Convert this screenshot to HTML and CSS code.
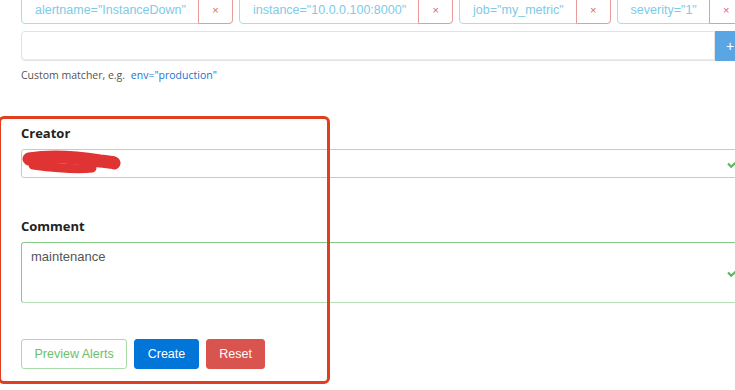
FILE: index.html
```html
<!DOCTYPE html>
<html lang="en">
<head>
  <meta charset="UTF-8" />
  <title>New Silence</title>
  <link rel="stylesheet" href="styles.css">
</head>
<body>
  <div class="page">

    <!-- Matchers -->
    <div class="chips">
      <div class="chip"><span class="chip-label">alertname="InstanceDown"</span><button class="chip-x">×</button></div>
      <div class="chip"><span class="chip-label">instance="10.0.0.100:8000"</span><button class="chip-x">×</button></div>
      <div class="chip"><span class="chip-label">job="my_metric"</span><button class="chip-x">×</button></div>
      <div class="chip"><span class="chip-label">severity="1"</span><button class="chip-x">×</button></div>
    </div>

    <div class="input-group">
      <input class="matcher-input" type="text">
      <button class="add-btn">+</button>
    </div>
    <p class="help">Custom matcher, e.g. <a href="#">env="production"</a></p>

    <!-- Creator / Comment -->
    <div class="field creator-field">
      <label>Creator</label>
      <div class="valid-wrap">
        <input class="form-input light" type="text">
        <svg class="check" width="12" height="9" viewBox="0 0 12 9"><path d="M1 3.5 L4.2 6.8 L10.5 0.8" fill="none" stroke="#5cb85c" stroke-width="2.2"/></svg>
        <svg class="scribble" width="110" height="30" viewBox="0 0 110 30"><path d="M7 9 C30 5 60 8 78 11 C86 12 90 12 92 13" fill="none" stroke="#e03333" stroke-width="13" stroke-linecap="round"/><path d="M11 15 C34 18 54 20 70 18" fill="none" stroke="#e03333" stroke-width="9" stroke-linecap="round"/></svg>
      </div>
    </div>

    <div class="field comment-field">
      <label>Comment</label>
      <div class="valid-wrap">
        <textarea class="form-input area">maintenance</textarea>
        <svg class="check check-area" width="12" height="9" viewBox="0 0 12 9"><path d="M1 3.5 L4.2 6.8 L10.5 0.8" fill="none" stroke="#5cb85c" stroke-width="2.2"/></svg>
      </div>
    </div>

    <div class="actions">
      <button class="btn btn-preview">Preview Alerts</button>
      <button class="btn btn-create">Create</button>
      <button class="btn btn-reset">Reset</button>
    </div>

  </div>

  <!-- highlight box -->
  <div class="highlight"></div>
</body>
</html>
```

FILE: styles.css
```css
body {
  margin: 0;
  background: #ffffff;
  font-family: "Liberation Sans", Arial, sans-serif;
  overflow: hidden;
}

.page {
  width: 739px;
  padding-left: 21px;
}

/* matcher chips */
.chips {
  display: flex;
  gap: 6px;
  margin-top: -4px;
  white-space: nowrap;
}
.chip {
  display: flex;
  height: 28px;
  border: 1px solid #a9dcef;
  border-radius: 4px;
  box-sizing: border-box;
  flex-shrink: 0;
}
.chip-label {
  display: flex;
  align-items: center;
  padding: 0 12px 0 13px;
  font-size: 12.5px;
  color: #7ccbe7;
}
.chip-x {
  width: 35px;
  margin: -1px -1px -1px 0;
  border: 1px solid #e99b9b;
  border-radius: 0 4px 4px 0;
  background: #fff;
  color: #e06666;
  font-size: 11px;
  font-family: "Liberation Sans", Arial, sans-serif;
  padding: 0;
}

.input-group {
  display: flex;
  margin-top: 7px;
  height: 30px;
}
.matcher-input {
  flex: 1;
  border: 1px solid #e2e2e2;
  border-radius: 4px 0 0 4px;
  box-shadow: inset 0 -1px 0 #ececec;
  outline: none;
}
.add-btn {
  width: 45px;
  border: none;
  background: #5aa6e4;
  color: #fff;
  font-size: 14px;
  text-align: left;
  padding-left: 11px;
}

.help {
  margin: 7px 0 0;
  font-family: "Open Sans", sans-serif;
  font-size: 10.5px;
  color: #555;
}
.help a {
  margin-left: 3px;
  color: #1a73d2;
  text-decoration: none;
}

/* form fields */
.field label {
  display: block;
  font-family: "Open Sans", sans-serif;
  font-weight: 700;
  font-size: 13px;
  color: #222;
  margin-bottom: 7px;
}
.creator-field {
  margin-top: 42px;
}
.comment-field {
  margin-top: 39px;
}
.valid-wrap {
  position: relative;
}
.form-input {
  display: block;
  width: 100%;
  box-sizing: border-box;
  border-radius: 3px;
  outline: none;
  font-family: "Liberation Sans", Arial, sans-serif;
  font-size: 13px;
  color: #555;
}
.light {
  height: 29px;
  border: 1px solid #addcad;
}
.area {
  height: 61px;
  border: 1px solid #86c986;
  border-bottom-color: #b5dfb5;
  padding: 6px 9px;
  resize: none;
}
.check {
  position: absolute;
  right: 21px;
  top: 11px;
}
.check-area {
  top: 27px;
}
.scribble {
  position: absolute;
  left: 1px;
  top: 1px;
}

/* buttons */
.actions {
  display: flex;
  gap: 7px;
  margin-top: 36px;
}
.btn {
  height: 30px;
  padding: 0 12.5px;
  border-radius: 3px;
  font-family: "Liberation Sans", Arial, sans-serif;
  font-size: 12.5px;
  cursor: pointer;
}
.btn-preview {
  background: #fff;
  border: 1px solid #a8dca8;
  color: #6cc06c;
}
.btn-create {
  background: #0275d8;
  border: 1px solid #0275d8;
  color: #fff;
}
.btn-reset {
  background: #d9534f;
  border: 1px solid #d9534f;
  color: #fff;
}

/* annotation rectangle */
.highlight {
  position: absolute;
  left: -2px;
  top: 116px;
  width: 326px;
  height: 262px;
  border: 3px solid #df3f1e;
  border-radius: 6px;
  pointer-events: none;
}
```
